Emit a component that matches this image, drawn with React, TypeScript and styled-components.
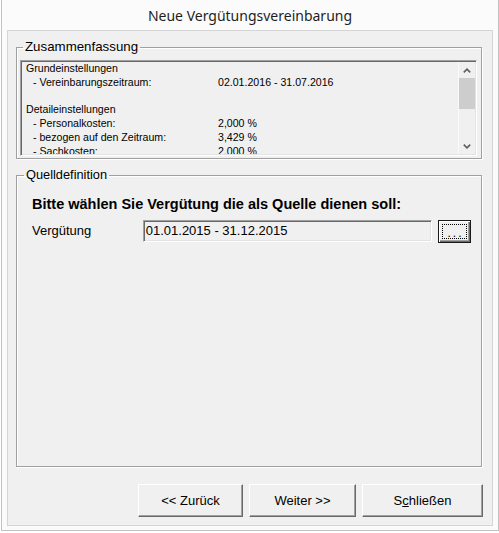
import React from "react";
import styled, { createGlobalStyle } from "styled-components";

const Global = createGlobalStyle`
  html, body { margin: 0; padding: 0; background: #ffffff; }
  body { font-family: "Liberation Sans", Arial, sans-serif; color: #000; }
  * { box-sizing: border-box; }
`;

const Window = styled.div`
  width: 498px;
  height: 531px;
  margin-left: 1px;
  border: 1px solid #c2c2c2;
  border-top: none;
  background: #fbfbfb;
  display: flex;
  flex-direction: column;
  padding: 0 5px 4px 5px;
`;

const Title = styled.div`
  height: 30px;
  padding-top: 2px;
  line-height: 28px;
  text-align: center;
  font-family: "Noto Sans", "Open Sans", sans-serif;
  font-size: 14px;
  color: #1e1e1e;
`;

const Panel = styled.div`
  flex: 1;
  display: flex;
  flex-direction: column;
  border: 1px solid #d5d5d5;
  background: #f0f0f0;
  padding: 0 9px 8px 8px;
`;

const GroupBox = styled.fieldset<{ $grow?: boolean; $top: number }>`
  margin: ${(p) => p.$top}px 1px 0 0;
  padding: 0;
  min-width: 0;
  border: 1px solid #a0a0a0;
  box-shadow: 1px 1px 0 #ffffff, inset 1px 1px 0 #ffffff;
  ${(p) => (p.$grow ? "flex: 1;" : "")}
  display: flex;
  flex-direction: column;
`;

const Legend = styled.legend<{ $size: number; $lh: number; $offset: number }>`
  margin-left: ${(p) => p.$offset}px;
  padding: 0 2px;
  font-size: ${(p) => p.$size}px;
  line-height: ${(p) => p.$lh}px;
  color: #000;
`;

const SummaryBody = styled.div`
  padding: 5px 4px 2px 3px;
`;

const ListBox = styled.div`
  height: 96px;
  border: 1px solid;
  border-color: #a0a0a0 #ffffff #ffffff #a0a0a0;
  box-shadow: inset 1px 1px 0 #696969, inset -1px -1px 0 #e3e3e3;
  padding: 1px;
  background: #f0f0f0;
  display: flex;
`;

const ListContent = styled.div`
  flex: 1;
  overflow: hidden;
  padding: 0 0 0 4px;
  font-size: 10.6px;
  line-height: 13.8px;
`;

const ListRow = styled.div<{ $indent?: boolean }>`
  display: grid;
  grid-template-columns: ${(p) => (p.$indent ? "185px" : "192px")} 1fr;
  padding-left: ${(p) => (p.$indent ? 7 : 0)}px;
  height: 13.8px;
  white-space: nowrap;
`;

const ScrollBar = styled.div`
  width: 17px;
  display: flex;
  flex-direction: column;
  border-left: 1px solid #fafafa;
  background: #f0f0f0;
`;

const ScrollButton = styled.div`
  height: 16px;
  display: flex;
  align-items: center;
  justify-content: center;
`;

const Thumb = styled.div`
  height: 31px;
  background: #cdcdcd;
`;

const Track = styled.div`
  flex: 1;
`;

const SourceBody = styled.div`
  padding: 14px 10px 0 15px;
  display: flex;
  flex-direction: column;
`;

const Prompt = styled.div`
  font-weight: bold;
  font-size: 14.5px;
  line-height: 16px;
  white-space: nowrap;
`;

const FieldRow = styled.div`
  margin-top: 8px;
  display: flex;
  align-items: flex-start;
`;

const FieldLabel = styled.div`
  width: 111px;
  font-size: 13px;
  line-height: 22px;
`;

const TextBox = styled.div`
  width: 290px;
  height: 22px;
  border: 1px solid;
  border-color: #a0a0a0 #ffffff #ffffff #a0a0a0;
  box-shadow: inset 1px 1px 0 #696969, inset -1px -1px 0 #e3e3e3;
  background: #f0f0f0;
  padding-left: 2px;
  font-size: 13px;
  line-height: 20px;
`;

const BrowseButton = styled.button`
  margin-left: 6px;
  width: 33px;
  height: 23px;
  padding: 3px;
  border: 1px solid #1a1a1a;
  background: #f0f0f0;
  box-shadow: inset 1px 1px 0 #ffffff, inset -1px -1px 0 #696969, inset -2px -2px 0 #a0a0a0;
  display: flex;
  font-family: "Liberation Sans", Arial, sans-serif;
`;

const FocusRect = styled.span`
  flex: 1;
  border: 1px dotted #000;
  display: flex;
  align-items: flex-end;
  justify-content: center;
  font-size: 12px;
  line-height: 9px;
  letter-spacing: 2px;
  padding-left: 2px;
  color: #000;
`;

const ButtonRow = styled.div`
  margin-top: 17px;
  display: flex;
  justify-content: flex-end;
  gap: 6px;
`;

const DialogButton = styled.button<{ $w: number }>`
  width: ${(p) => p.$w}px;
  height: 33px;
  border: 1px solid;
  border-color: #ffffff #696969 #696969 #ffffff;
  box-shadow: inset -1px -1px 0 #a0a0a0;
  background: #f0f0f0;
  font-family: "Liberation Sans", Arial, sans-serif;
  font-size: 13px;
  color: #000;
  padding: 0;
`;

const Chevron = ({ up }: { up?: boolean }) => (
  <svg width="8" height="5" viewBox="0 0 8 5">
    <path
      d={up ? "M0.8 4.3 L4 1.2 L7.2 4.3" : "M0.8 0.7 L4 3.8 L7.2 0.7"}
      fill="none"
      stroke="#606060"
      strokeWidth="1.7"
    />
  </svg>
);

const rows: { label: string; value?: string; indent?: boolean }[] = [
  { label: "Grundeinstellungen" },
  { label: "- Vereinbarungszeitraum:", value: "02.01.2016 - 31.07.2016", indent: true },
  { label: "" },
  { label: "Detaileinstellungen" },
  { label: "- Personalkosten:", value: "2,000 %", indent: true },
  { label: "- bezogen auf den Zeitraum:", value: "3,429 %", indent: true },
  { label: "- Sachkosten:", value: "2,000 %", indent: true },
];

export default function App() {
  return (
    <>
      <Global />
      <Window>
        <Title>Neue Vergütungsvereinbarung</Title>
        <Panel>
          <GroupBox $top={8}>
            <Legend $size={13.3} $lh={16} $offset={6}>Zusammenfassung</Legend>
            <SummaryBody>
              <ListBox>
                <ListContent>
                  {rows.map((r, i) => (
                    <ListRow key={i} $indent={r.indent}>
                      <span>{r.label}</span>
                      <span>{r.value ?? ""}</span>
                    </ListRow>
                  ))}
                </ListContent>
                <ScrollBar>
                  <ScrollButton><Chevron up /></ScrollButton>
                  <Thumb />
                  <Track />
                  <ScrollButton><Chevron /></ScrollButton>
                </ScrollBar>
              </ListBox>
            </SummaryBody>
          </GroupBox>
          <GroupBox $top={9} $grow>
            <Legend $size={12.8} $lh={14} $offset={7}>Quelldefinition</Legend>
            <SourceBody>
              <Prompt>Bitte wählen Sie Vergütung die als Quelle dienen soll:</Prompt>
              <FieldRow>
                <FieldLabel>Vergütung</FieldLabel>
                <TextBox>01.01.2015 - 31.12.2015</TextBox>
                <BrowseButton>
                  <FocusRect>...</FocusRect>
                </BrowseButton>
              </FieldRow>
            </SourceBody>
          </GroupBox>
          <ButtonRow>
            <DialogButton $w={105}>&lt;&lt; Zurück</DialogButton>
            <DialogButton $w={107}>Weiter &gt;&gt;</DialogButton>
            <DialogButton $w={121}>
              S<u>c</u>hließen
            </DialogButton>
          </ButtonRow>
        </Panel>
      </Window>
    </>
  );
}
